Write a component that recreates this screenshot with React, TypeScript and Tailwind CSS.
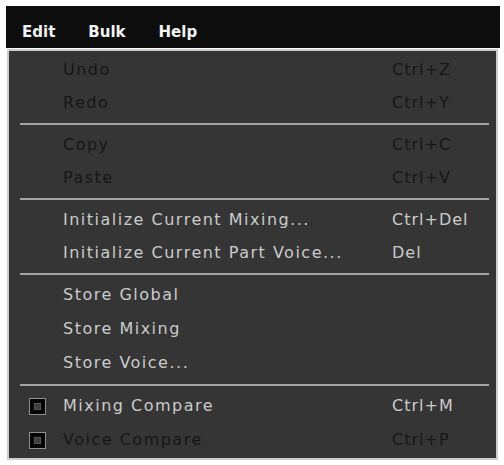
import React from "react";

type Item = { label: string; shortcut?: string; enabled: boolean; check?: boolean };

const groups: { h: string; items: Item[] }[] = [
  {
    h: "h-[33px]",
    items: [
      { label: "Undo", shortcut: "Ctrl+Z", enabled: false },
      { label: "Redo", shortcut: "Ctrl+Y", enabled: false },
    ],
  },
  {
    h: "h-[33px]",
    items: [
      { label: "Copy", shortcut: "Ctrl+C", enabled: false },
      { label: "Paste", shortcut: "Ctrl+V", enabled: false },
    ],
  },
  {
    h: "h-[33px]",
    items: [
      { label: "Initialize Current Mixing...", shortcut: "Ctrl+Del", enabled: true },
      { label: "Initialize Current Part Voice...", shortcut: "Del", enabled: true },
    ],
  },
  {
    h: "h-[34px]",
    items: [
      { label: "Store Global", enabled: true },
      { label: "Store Mixing", enabled: true },
      { label: "Store Voice...", enabled: true },
    ],
  },
  {
    h: "h-[34px]",
    items: [
      { label: "Mixing Compare", shortcut: "Ctrl+M", enabled: true, check: true },
      { label: "Voice Compare", shortcut: "Ctrl+P", enabled: false, check: true },
    ],
  },
];

function Check() {
  return (
    <div className="w-[17px] h-[17px] border border-[#8e8e8e] bg-[#050505] flex items-center justify-center">
      <div className="w-[7px] h-[7px] bg-[#3e3e3e] border border-[#555555]" />
    </div>
  );
}

export default function App() {
  return (
    <div className="w-[504px] h-[465px] bg-white overflow-hidden" style={{ fontFamily: '"DejaVu Sans", Verdana, sans-serif' }}>
      <div className="ml-[6px] mt-[6px] w-[494px] h-[42px] bg-[#0d0d0d] flex pl-[16px] gap-[33px] pt-[17px] text-[15px] leading-[18px] font-bold text-[#f2f2f2]">
        <span>Edit</span>
        <span>Bulk</span>
        <span>Help</span>
      </div>
      <div className="ml-[7px] mt-[1px] w-[491px] border-2 border-[#cdcdcd] bg-[#353535] pt-[2px] pb-[1px]">
        {groups.map((g, gi) => (
          <div key={gi}>
            {gi > 0 && (
              <div className="h-[9px] flex items-center ml-[11px] mr-[7px]">
                <div className="h-[2px] w-full bg-[#a4a4a4]" />
              </div>
            )}
            {g.items.map((it) => (
              <div key={it.label} className={`${g.h} flex items-center pl-[20px] text-[16px] leading-[18px] tracking-[1.5px] ${it.enabled ? "text-[#cbcbcb]" : "text-[#161616]"}`}>
                <div className="w-[34px] flex items-center">{it.check && <Check />}</div>
                <div className="w-[329px] whitespace-nowrap">{it.label}</div>
                <div className="whitespace-nowrap tracking-[1px]">{it.shortcut}</div>
              </div>
            ))}
          </div>
        ))}
      </div>
    </div>
  );
}
